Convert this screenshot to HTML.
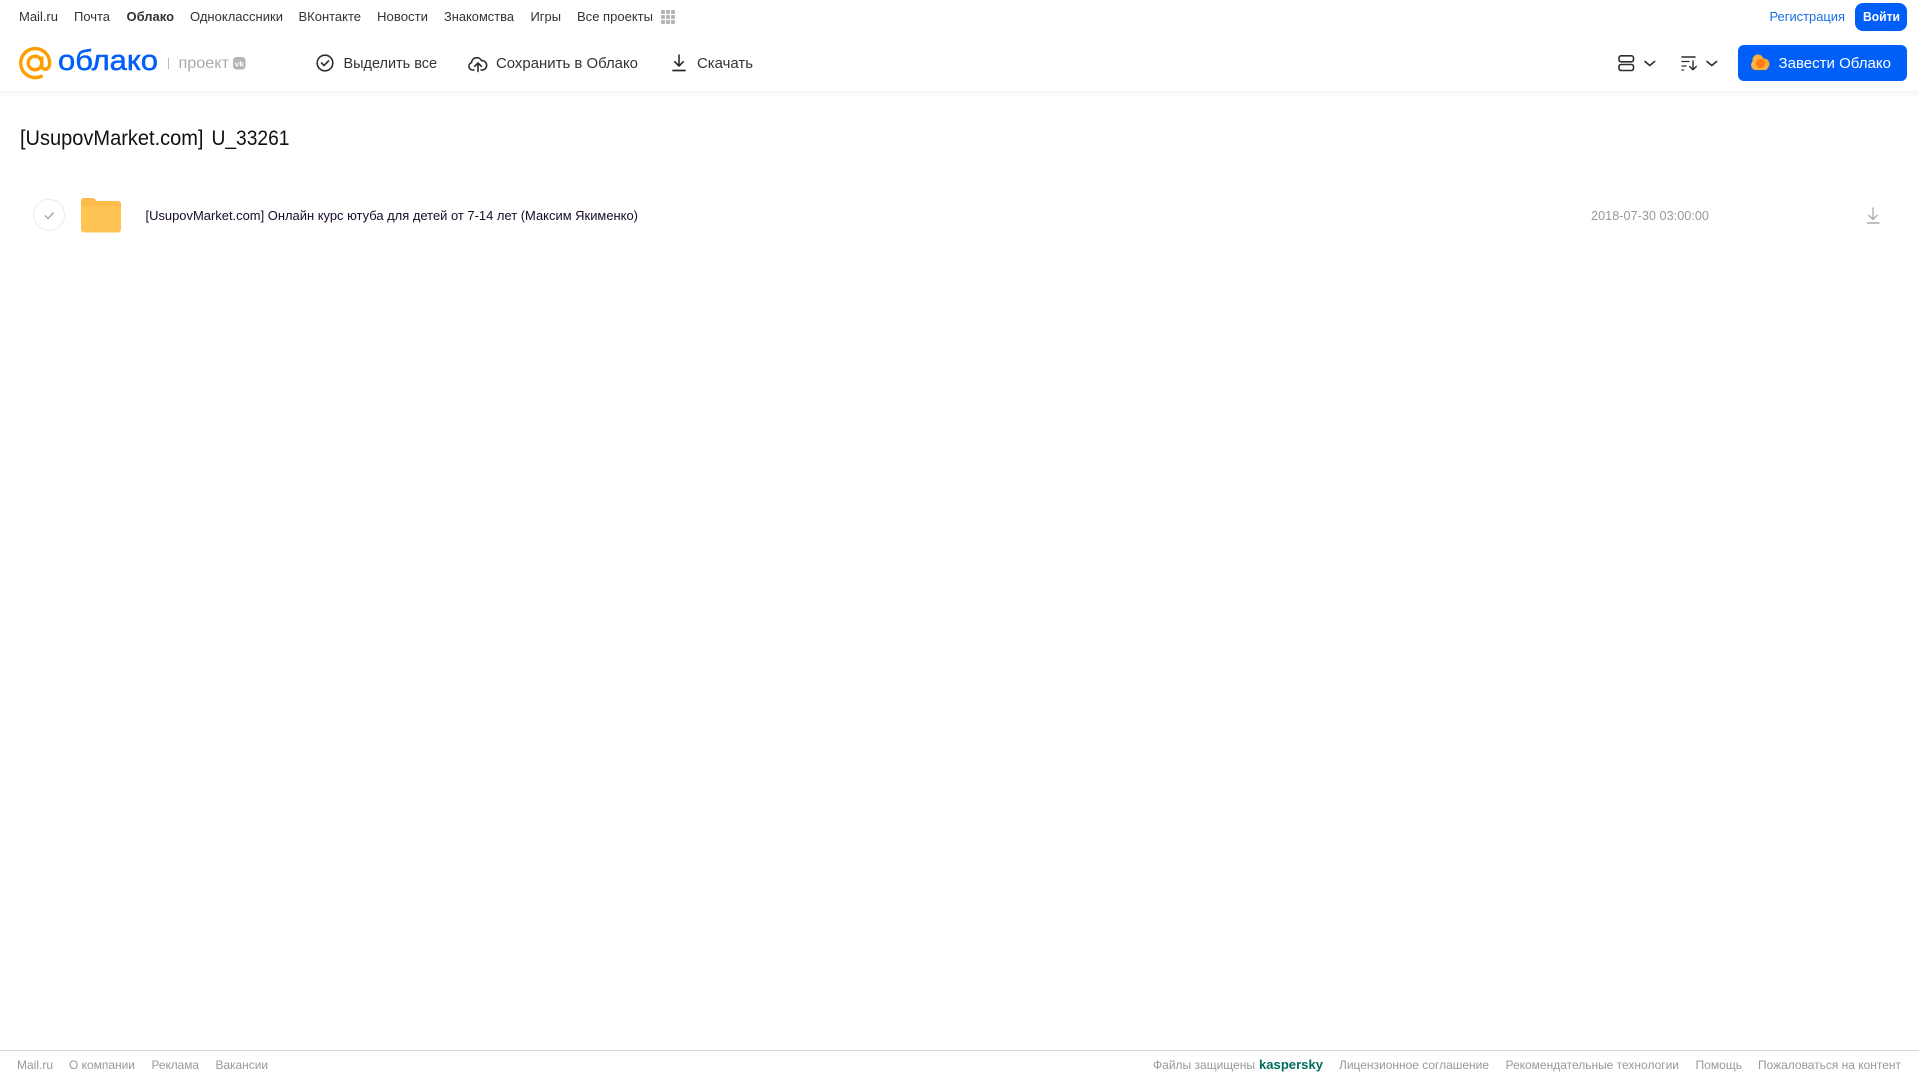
<!DOCTYPE html>
<html lang="ru">
<head>
<meta charset="utf-8">
<title>Облако</title>
<style>
html,body{margin:0;padding:0;background:#fff;width:1919px;height:1079px;overflow:hidden}
svg{display:block}
text{font-family:"Liberation Sans",Arial,sans-serif;white-space:pre}
.n{font-size:13px;fill:#333}
.a{font-size:15px;fill:#333}
.f{font-size:12px;fill:#999}
</style>
</head>
<body>
<svg width="1919" height="1079" viewBox="0 0 1919 1079" xmlns="http://www.w3.org/2000/svg">
<defs>
<linearGradient id="sh" x1="0" y1="0" x2="0" y2="1"><stop offset="0" stop-color="#f3f3f3"/><stop offset="1" stop-color="#fff"/></linearGradient>
</defs>
<rect width="1919" height="1079" fill="#fff"/>
<rect y="91" width="1919" height="7" fill="url(#sh)"/>

<!-- top nav -->
<text class="n" x="19" y="21" textLength="39" lengthAdjust="spacingAndGlyphs">Mail.ru</text>
<text class="n" x="74" y="21" textLength="36" lengthAdjust="spacingAndGlyphs">Почта</text>
<text class="n" x="126.500" y="21" textLength="47.500" lengthAdjust="spacingAndGlyphs" font-weight="700">Облако</text>
<text class="n" x="190" y="21" textLength="93" lengthAdjust="spacingAndGlyphs">Одноклассники</text>
<text class="n" x="298.500" y="21" textLength="62.500" lengthAdjust="spacingAndGlyphs">ВКонтакте</text>
<text class="n" x="377" y="21" textLength="51" lengthAdjust="spacingAndGlyphs">Новости</text>
<text class="n" x="444" y="21" textLength="70" lengthAdjust="spacingAndGlyphs">Знакомства</text>
<text class="n" x="530.500" y="21" textLength="30.500" lengthAdjust="spacingAndGlyphs">Игры</text>
<text class="n" x="577" y="21" textLength="76" lengthAdjust="spacingAndGlyphs">Все проекты</text>
<g fill="#b4b4b4">
<rect x="661" y="10" width="4" height="4" rx="1"/><rect x="666" y="10" width="4" height="4" rx="1"/><rect x="671" y="10" width="4" height="4" rx="1"/>
<rect x="661" y="15" width="4" height="4" rx="1"/><rect x="666" y="15" width="4" height="4" rx="1"/><rect x="671" y="15" width="4" height="4" rx="1"/>
<rect x="661" y="20" width="4" height="4" rx="1"/><rect x="666" y="20" width="4" height="4" rx="1"/><rect x="671" y="20" width="4" height="4" rx="1"/>
</g>
<text class="n" x="1769.500" y="21" textLength="75.500" lengthAdjust="spacingAndGlyphs" style="fill:#1a6fe8">Регистрация</text>
<rect x="1855" y="3" width="52" height="28" rx="8" fill="#005ff9"/>
<text class="n" x="1863" y="21" textLength="37" lengthAdjust="spacingAndGlyphs" font-weight="700" style="fill:#fff">Войти</text>

<!-- logo -->
<g fill="none" stroke="#ff9e00" stroke-width="3.400">
<circle cx="35" cy="63" r="6.800"/>
<path d="M41.800 56.500v8.500c0 2.800 1.500 4.300 3.500 4.300 2.400 0 4.400-2.400 4.400-6.300a14.500 14.500 0 1 0-7.200 12.600"/>
</g>
<text x="58" y="70" font-size="29" textLength="100" lengthAdjust="spacingAndGlyphs" fill="#005ff9" stroke="#005ff9" stroke-width=".5">облако</text>
<rect x="168" y="58" width="1" height="11" fill="#bbb"/>
<text x="178.500" y="68" font-size="16" textLength="50.500" lengthAdjust="spacingAndGlyphs" fill="#aaa">проект</text>
<rect x="233" y="57" width="12.500" height="12.500" rx="3.500" fill="#b5b5b5"/>
<text x="234.500" y="66.500" font-size="7.500" font-weight="700" fill="#fff" textLength="9.500" lengthAdjust="spacingAndGlyphs">vk</text>

<!-- actions -->
<g fill="none" stroke="#2c2d2e" stroke-width="1.600" stroke-linecap="round" stroke-linejoin="round">
<circle cx="325" cy="63" r="7.800"/>
<path d="M321.500 63l2.500 2.500 4.500-4.500"/>
<path d="M474 70h-1.500a3.800 3.800 0 0 1-1-7.400 5.300 5.300 0 0 1 10-2 4.600 4.600 0 0 1 .8 9.400h-1.300"/>
<path d="M478 71.500v-8M474.700 66.300l3.300-3.300 3.300 3.300"/>
<path d="M679 55v11M674.700 61.700l4.300 4.300 4.300-4.300"/>
<path d="M673 70.500h12" stroke-width="1.800"/>
</g>
<text class="a" x="343.500" y="68" textLength="93.500" lengthAdjust="spacingAndGlyphs">Выделить все</text>
<text class="a" x="496" y="68" textLength="142" lengthAdjust="spacingAndGlyphs">Сохранить в Облако</text>
<text class="a" x="697" y="68" textLength="56" lengthAdjust="spacingAndGlyphs">Скачать</text>

<!-- view / sort -->
<g fill="none" stroke="#2c2d2e" stroke-width="1.600" stroke-linecap="round" stroke-linejoin="round">
<rect x="1619" y="55.800" width="14.500" height="6" rx="2"/>
<rect x="1619" y="64.500" width="14.500" height="6" rx="2"/>
<path d="M1645 61.500l4.800 4 4.800-4"/>
<path d="M1682 57h13" />
<path d="M1682 61.500h7" stroke-width="1.300"/>
<path d="M1682 66h4" stroke-width="1.300"/>
<path d="M1682 70h1.500" stroke-width="1.300"/>
<path d="M1693 61v8.500M1689.700 66.500l3.300 3.300 3.300-3.300" stroke-width="1.400"/>
<path d="M1707 61.500l4.800 4 4.800-4"/>
</g>

<!-- CTA -->
<rect x="1738" y="45" width="169" height="36" rx="6" fill="#005ff9"/>
<circle cx="1756" cy="65" r="5" fill="#ffb84d"/>
<circle cx="1758" cy="60" r="5.500" fill="#ffb03a"/>
<circle cx="1764" cy="64" r="5.500" fill="#ffa726"/>
<rect x="1752" y="64" width="16" height="6" rx="3" fill="#ffb03a"/>
<circle cx="1760.500" cy="63.500" r="4.500" fill="#ff7a1a"/>
<text class="a" x="1778.500" y="68" textLength="112.500" lengthAdjust="spacingAndGlyphs" style="fill:#fff">Завести Облако</text>

<!-- title -->
<text x="20" y="145" font-size="21" textLength="183.500" lengthAdjust="spacingAndGlyphs" fill="#111">[UsupovMarket.com]</text>
<text x="211.500" y="145" font-size="21" textLength="78" lengthAdjust="spacingAndGlyphs" fill="#111">U_33261</text>

<!-- row -->
<circle cx="49" cy="215" r="15.500" fill="#fff" stroke="#ececec" stroke-width="1"/>
<path d="M45 215.500l3 3 5.500-6" fill="none" stroke="#a3a3a3" stroke-width="1.300"/>
<path d="M81 201a3 3 0 0 1 3-3h8c2.500 0 3.500 1.500 4.500 3H118a3 3 0 0 1 3 3v4H81z" fill="#fdbb49"/>
<path d="M81 206h40v23.500a3 3 0 0 1-3 3H84a3 3 0 0 1-3-3z" fill="#ffc453"/>
<text x="145.500" y="220" font-size="12.500" textLength="492.500" lengthAdjust="spacingAndGlyphs" fill="#1a0b25">[UsupovMarket.com] Онлайн курс ютуба для детей от 7-14 лет (Максим Якименко)</text>
<text x="1591" y="220" font-size="12.500" textLength="118" lengthAdjust="spacingAndGlyphs" fill="#999">2018-07-30 03:00:00</text>
<g fill="none" stroke="#aaa" stroke-width="1.300">
<path d="M1873 207.500v12M1868.500 215l4.500 4.500 4.500-4.500"/>
<path d="M1867 223h12.500" stroke-width="1.500"/>
</g>

<!-- footer -->
<rect y="1050" width="1919" height="1" fill="#d8d8d8"/>
<text class="f" x="17" y="1069" textLength="36" lengthAdjust="spacingAndGlyphs">Mail.ru</text>
<text class="f" x="69" y="1069" textLength="66" lengthAdjust="spacingAndGlyphs">О компании</text>
<text class="f" x="151.500" y="1069" textLength="47.500" lengthAdjust="spacingAndGlyphs">Реклама</text>
<text class="f" x="215.500" y="1069" textLength="52.500" lengthAdjust="spacingAndGlyphs">Вакансии</text>
<text class="f" x="1153" y="1069" textLength="102" lengthAdjust="spacingAndGlyphs">Файлы защищены</text>
<text x="1259" y="1069" font-size="13" font-weight="700" textLength="64" lengthAdjust="spacingAndGlyphs" fill="#006d5c">kaspersky</text>
<text class="f" x="1339" y="1069" textLength="150" lengthAdjust="spacingAndGlyphs">Лицензионное соглашение</text>
<text class="f" x="1505.500" y="1069" textLength="173.500" lengthAdjust="spacingAndGlyphs">Рекомендательные технологии</text>
<text class="f" x="1695.500" y="1069" textLength="46.500" lengthAdjust="spacingAndGlyphs">Помощь</text>
<text class="f" x="1758" y="1069" textLength="143" lengthAdjust="spacingAndGlyphs">Пожаловаться на контент</text>
</svg>
</body>
</html>
